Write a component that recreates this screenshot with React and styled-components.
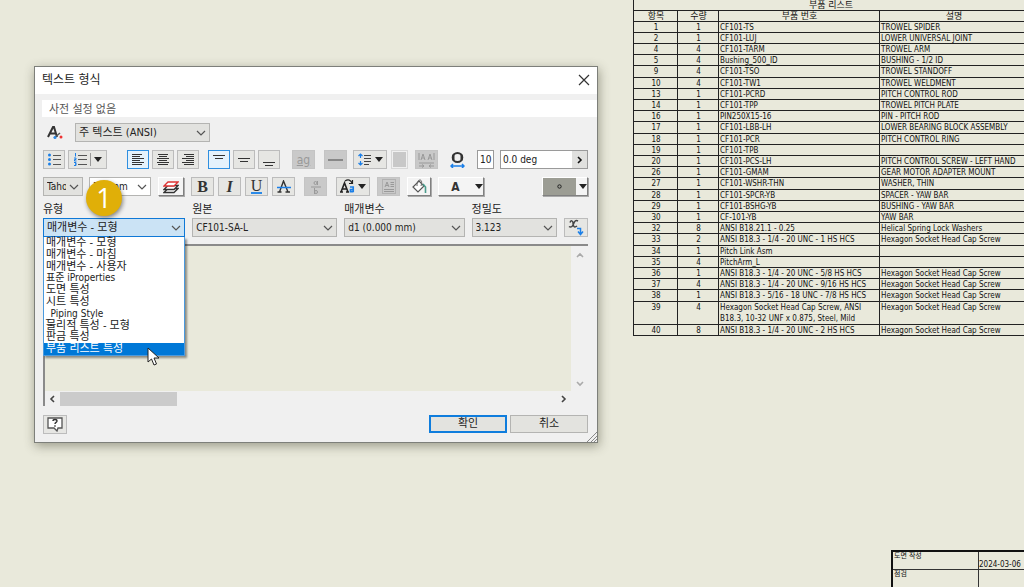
import React from 'react';
import styled, { createGlobalStyle, css } from 'styled-components';

const Global = createGlobalStyle`
  * { box-sizing: border-box; }
  body { margin: 0; background: #e9e9db; }
  body, button, input, select, table {
    font-family: 'DejaVu Sans Condensed', 'Noto Sans', 'Noto Sans CJK KR', sans-serif;
  }
`;

const Page = styled.main`
  display: flex;
  flex-direction: column;
  min-height: 100vh;
  overflow: hidden;
  color: #222;
`;

const Workspace = styled.div`
  display: flex;
  align-items: flex-start;
  padding-left: 34px;
  gap: 35px;
`;

/* ---------- dialog ---------- */

const Dialog = styled.section`
  position: relative;
  flex: 1;
  min-width: 0;
  margin-top: 66px;
  border: 1px solid #7d7f7a;
  background: #f0f0f0;
  box-shadow: 1px 3px 10px rgba(60, 60, 40, 0.45);
  font-size: 11px;
`;

const TitleBar = styled.header`
  display: flex;
  align-items: center;
  justify-content: space-between;
  height: 27px;
  padding: 0 7px 2px;
  background: #fff;
`;

const Title = styled.h1`
  margin: 0;
  font-size: 12px;
  font-weight: 400;
  line-height: 16px;
`;

const CloseButton = styled.button`
  display: flex;
  padding: 0;
  border: 0;
  background: none;
`;

const Preset = styled.input`
  display: block;
  width: calc(100% - 7px);
  height: 17px;
  margin: 6px 0 6px 7px;
  padding: 0 7px 2px;
  border: 0;
  background: #fff;
  color: #555;
  font-size: 11px;
`;

const Row = styled.div`
  display: flex;
  align-items: center;
  height: 19px;
  margin: 0 9px 8px 8px;
`;

const Group = styled.div`
  display: flex;
  align-items: center;
  gap: ${(p) => p.$gap || 3}px;
  margin-left: ${(p) => (p.$push ? 'auto' : `${p.$lead || 0}px`)};
  flex: ${(p) => (p.$grow ? '1' : 'none')};
`;

const ToolButton = styled.button`
  display: flex;
  align-items: center;
  justify-content: center;
  gap: 3px;
  flex: none;
  width: ${(p) => p.$w || 22}px;
  height: 19px;
  padding: 0;
  border: 1px solid #bcbcbc;
  background: #e6e6e3;
  color: #333;
  ${(p) => p.$on && css`border: 1px solid #2f8fe0; background: #e4f2fc;`}
  ${(p) => p.$off && css`border-color: #c4c4c4; background: #c9c9c9; color: #999;`}
  ${(p) => p.$raised && css`
    background: #f4f4f4;
    border-color: #fff #808080 #808080 #fff;
    box-shadow: 1px 1px 0 #aaa;
  `}
`;

const SelectBox = styled.span`
  position: relative;
  display: flex;
  width: ${(p) => (p.$w ? `${p.$w}px` : 'auto')};
  min-width: 0;
  height: 19px;
  border: 1px solid ${(p) => (p.$open ? '#0f78d6' : '#b4b4b2')};
  background: ${(p) => (p.$open ? '#cbe3f5' : p.$white ? '#fff' : '#e2e2df')};

  select {
    appearance: none;
    flex: 1;
    min-width: 0;
    width: 100%;
    padding: 0 16px 0 3px;
    border: 0;
    background: none;
    color: #222;
    font-size: ${(p) => (p.$latin ? 10 : 11)}px;
    line-height: 17px;
    text-overflow: clip;
  }
  svg {
    position: absolute;
    right: 3px;
    top: 6px;
    pointer-events: none;
  }
`;

const NumberField = styled.input`
  width: ${(p) => (p.$w ? `${p.$w}px` : '100%')};
  min-width: 0;
  height: 19px;
  padding: 0 1px 0 2px;
  border: 1px solid #9a9a9a;
  background: #fff;
  color: #222;
  font-size: 10px;
`;

const AngleField = styled.span`
  display: flex;
  flex: 1;
  min-width: 0;
  border: 1px solid #9a9a9a;
  height: 19px;
  input { border: 0; height: 17px; }
  button {
    display: flex;
    align-items: center;
    justify-content: center;
    flex: none;
    width: 15px;
    padding: 0;
    border: 0;
    background: #e0e0de;
  }
`;

const ColorBox = styled.span`
  width: 17px;
  height: 19px;
  border: 1px solid #d8d8d8;
  background: #c8c8c8;
  box-shadow: inset 0 0 0 1px #f0f0f0;
`;

const Glyph = styled.span`
  font-family: 'Liberation Serif', serif;
  font-size: 16px;
  line-height: 16px;
  font-weight: ${(p) => (p.$light ? 400 : 700)};
  font-style: ${(p) => (p.$italic ? 'italic' : 'normal')};
  ${(p) => p.$under && 'border-bottom: 2px solid #2b8ae8; font-weight: 400; line-height: 13px;'}
`;

const SmallGlyph = styled.span`
  font-size: 12px;
  line-height: 12px;
  font-weight: ${(p) => (p.$bold ? 700 : 400)};
  text-decoration: ${(p) => (p.$under ? 'underline' : 'none')};
`;

const Swatch = styled.span`
  flex: 1;
  align-self: stretch;
  display: flex;
  align-items: center;
  justify-content: center;
  background: #9c9d94;
`;

const Fields = styled.div`
  display: grid;
  grid-template-columns: 143fr 146fr 121fr 86fr 24px;
  column-gap: 7px;
  align-items: end;
  margin: 0 9px 7px 8px;
`;

const Field = styled.div`
  position: relative;
  min-width: 0;
  label {
    display: block;
    height: 14px;
    line-height: 12px;
    white-space: nowrap;
  }
`;

const Menu = styled.ul`
  position: absolute;
  z-index: 2;
  top: 100%;
  left: 0;
  right: 0;
  display: flex;
  flex-direction: column;
  height: 119px;
  margin: 0;
  padding: 0;
  border: solid #4b9ade;
  border-width: 0 1px 1px;
  background: #fff;
  box-shadow: 2px 2px 2px rgba(0, 0, 0, 0.4);
  list-style: none;
`;

const Option = styled.li`
  flex: 1;
  min-height: 0;
  padding-left: 2px;
  font-size: ${(p) => (p.$latin ? 10 : 11)}px;
  line-height: 12px;
  white-space: nowrap;
  ${(p) => p.$on && css`background: #0078d7; color: #fff;`}
`;

const Editor = styled.div`
  display: grid;
  grid-template: 145px 15px / 1fr 17px;
  margin: 0 9px 9px 8px;
  border-top: 2px solid #8a8a8a;
  border-left: 2px solid #8a8a8a;
  background: #f0f0f0;

  textarea {
    width: 100%;
    height: 100%;
    padding: 4px;
    border: 0;
    resize: none;
    background: #e9e9db;
  }
`;

const VerticalScroll = styled.div`
  display: flex;
  flex-direction: column;
  align-items: center;
  justify-content: space-between;
  padding: 5px 0 3px;
`;

const HorizontalScroll = styled.div`
  display: flex;
  align-items: center;
  justify-content: space-between;
  padding: 0 3px;
`;

const Thumb = styled.span`
  width: 117px;
  height: 14px;
  margin: 0 auto 0 4px;
  background: #cbcbcb;
`;

const Footer = styled.footer`
  display: flex;
  gap: 3px;
  padding: 0 9px 8px 8px;
`;

const Spacer = styled.span`
  flex: 1;
`;

const DialogButton = styled.button`
  width: 78px;
  height: 18px;
  padding: 0;
  border: ${(p) => (p.$primary ? '2px solid #0f7ddd' : '1px solid #b4b4b2')};
  background: #e3e3df;
  color: #222;
  font-size: 11px;
  line-height: 14px;
`;

const Grip = styled.svg`
  position: absolute;
  right: 0;
  bottom: 0;
`;

const Badge = styled.span`
  position: absolute;
  z-index: 3;
  left: 51px;
  top: 113px;
  width: 36px;
  height: 36px;
  border-radius: 50%;
  background: #e0af08;
  box-shadow: 1px 2px 4px rgba(0, 0, 0, 0.45);
  color: #fff;
  font-family: 'Open Sans', sans-serif;
  font-size: 27px;
  line-height: 36px;
  text-align: center;
`;

const Pointer = styled.svg`
  position: absolute;
  z-index: 4;
  left: 112px;
  top: 280px;
`;

/* ---------- drawing sheet ---------- */

const Sheet = styled.div`
  flex: none;
  width: 391px;
  overflow: hidden;
`;

const PartsTable = styled.table`
  width: 395px;
  table-layout: fixed;
  border-collapse: separate;
  border-spacing: 0;
  border-left: 1px solid #222;
  font-size: 8px;
  line-height: 9px;
  color: #111;

  th, td {
    height: 11px;
    padding: 1px 0 0 1px;
    border: 0 solid #222;
    border-width: 0 1px 1px 0;
    font-weight: 400;
    text-align: left;
    vertical-align: top;
    white-space: nowrap;
  }
  thead th { font-size: 9px; text-align: center; }
  td:nth-child(-n + 2) { text-align: center; }
  tbody tr:nth-child(5n) td { height: 12px; }
`;

const Line = styled.span`
  display: block;
  & + & { margin-top: 2px; padding-bottom: 1px; }
`;

const TitleBlock = styled.table`
  align-self: flex-end;
  width: 133px;
  margin-top: auto;
  table-layout: fixed;
  border-collapse: separate;
  border-spacing: 0;
  border: solid #111;
  border-width: 2px 0 0 2px;
  color: #111;

  th, td {
    padding: 0 1px;
    border: 0 solid #333;
    font-weight: 400;
    line-height: 8px;
    text-align: left;
    white-space: nowrap;
  }
  th { font-size: 7px; border-right-width: 1px; vertical-align: top; }
  td { font-size: 8px; vertical-align: bottom; padding: 0; }
  tr:first-child > * { height: 18px; border-bottom-width: 1px; }
  tr:last-child > * { height: 17px; }
`;

/* ---------- icons ---------- */

const Chevron = () => (
  <svg width="10" height="6" viewBox="0 0 10 6" fill="none" stroke="#555" strokeWidth="1.2">
    <path d="M1 1l4 4 4-4" />
  </svg>
);

const Arrow = ({ up, left, right, color = '#444' }) => (
  <svg width="8" height="8" viewBox="0 0 8 8" fill="none" stroke={color} strokeWidth="1.6">
    <path d={up ? 'M1 6l3-3 3 3' : left ? 'M6 1L3 4l3 3' : right ? 'M2 1l3 3-3 3' : 'M1 2l3 3 3-3'} />
  </svg>
);

const Triangle = () => (
  <svg width="8" height="5" viewBox="0 0 8 5"><path d="M0 0h8L4 5z" fill="#222" /></svg>
);

const BulletIcon = () => (
  <svg width="13" height="13" viewBox="0 0 13 13">
    <circle cx="1.500" cy="2" r="1.500" fill="#1b7fe8" />
    <circle cx="1.500" cy="6.500" r="1.500" fill="#1b7fe8" />
    <circle cx="1.500" cy="11" r="1.500" fill="#1b7fe8" />
    <path d="M5 2.500h8M5 6.500h8M5 11.500h8" stroke="#555" strokeWidth="1" />
  </svg>
);

const NumberedIcon = () => (
  <svg width="13" height="13" viewBox="0 0 13 13" fill="none">
    <path d="M1.500 0v3.500M0 5h2v1.500H0.500V8h2M0 9.500h2v1.500H1h1v1.500H0" stroke="#1b7fe8" />
    <path d="M4 2.500h9M4 6.500h9M4 11.500h9" stroke="#555" />
  </svg>
);

const AlignIcon = ({ kind }) => {
  const start = (w) => (kind === 'left' ? 0 : kind === 'center' ? (12 - w) / 2 : 12 - w);
  return (
    <svg width="12" height="13" viewBox="0 0 12 13">
      {[10, 8, 12, 8, 12, 10].map((w, i) => (
        <rect key={i} x={start(w)} y={i * 2 + 1} width={w} height="1" fill="#333" />
      ))}
    </svg>
  );
};

const VAlignIcon = ({ y }) => (
  <svg width="12" height="15" viewBox="0 0 12 15" stroke="#333">
    <path d={`M0 ${y}.5h12M2 ${y + 3}.5h8`} />
  </svg>
);

const StyleIcon = () => (
  <svg width="17" height="15" viewBox="0 0 17 15" fill="none">
    <path d="M1 12L6 2h1l3 10M3.500 8.500h6" stroke="#333" strokeWidth="2" />
    <path d="M7 13l6-5" stroke="#555" strokeWidth="1.500" />
    <circle cx="8" cy="12.500" r="1.500" fill="#2b8ae8" />
    <circle cx="14" cy="12" r="1.500" fill="#e33" />
  </svg>
);

const SpacingIcon = () => (
  <svg width="14" height="13" viewBox="0 0 14 13" fill="none">
    <path d="M2.500 1v4M.500 3l2-2 2 2M2.500 8v4M.500 10l2 2 2-2" stroke="#1b7fe8" strokeWidth="1.200" />
    <path d="M6 2.500h7M6 5.500h7M6 8.500h7M6 11.500h5" stroke="#444" />
  </svg>
);

const FitTextIcon = () => (
  <svg width="17" height="16" viewBox="0 0 17 16" fill="none" stroke="#999">
    <path d="M1 1v7M16 1v7M3 8l2-6 2 6M4 6h2M10 8l2-6 2 6M11 6h2M1 11h15M1 14h5M4 12.500L6 14l-2 1.500M16 14h-5M13 12.500L11 14l2 1.500" />
  </svg>
);

const StretchIcon = () => (
  <svg width="15" height="16" viewBox="0 0 15 16" fill="none">
    <ellipse cx="7.500" cy="5.500" rx="4.800" ry="4.500" stroke="#333" strokeWidth="2" />
    <path d="M3.500 2.500v6M11.500 2.500v6" stroke="#333" strokeWidth="2" />
    <path d="M1 14h13M3 12l-2 2 2 2M12 12l2 2-2 2" stroke="#1b7fe8" strokeWidth="1.500" />
  </svg>
);

const LayersIcon = () => (
  <svg width="16" height="14" viewBox="0 0 16 14" fill="#fff" strokeWidth="1.300">
    <path d="M1 12.500l4-4h10l-4 4z" stroke="#333" />
    <path d="M1 9.500l4-4h10l-4 4z" stroke="#333" />
    <path d="M1 6l4-4h10l-4 4z" stroke="#d33" />
  </svg>
);

const StrikeIcon = () => (
  <svg width="14" height="13" viewBox="0 0 14 13" fill="none">
    <path d="M2.500 12L6.500 1l4.500 11M.500 12h4M8.500 12h4.500" stroke="#333" strokeWidth="1.400" />
    <path d="M0 7.500h14" stroke="#1b7fe8" strokeWidth="1.500" />
  </svg>
);

const FractionIcon = () => (
  <svg width="10" height="16" viewBox="0 0 10 16" fill="none" stroke="#999">
    <circle cx="4.500" cy="4" r="1.500" /><path d="M6.500 2v4M0 8h10M3.500 9v6" /><circle cx="5" cy="13" r="1.500" />
  </svg>
);

const CaseIcon = () => (
  <svg width="15" height="15" viewBox="0 0 15 15" fill="none">
    <path d="M1 13L4.500 4 8 13M2.500 10h4M0 13h3M6 13h3" stroke="#222" strokeWidth="1.600" />
    <path d="M5 2c3-2 6-1 7 2M12.500 1v3.500H9" stroke="#222" strokeWidth="1.200" />
    <path d="M10 8h3.200v5.200M13 10.500h-2.500v2.200H13" stroke="#1b7fe8" strokeWidth="1.700" />
  </svg>
);

const TextBoxIcon = () => (
  <svg width="14" height="15" viewBox="0 0 14 15" fill="none" stroke="#999">
    <rect x=".500" y=".500" width="13" height="14" strokeDasharray="1 1" />
    <path d="M3 8l2-5 2 5M4 6.500h2M8.500 3.500H12M8.500 5.500H12M8.500 7.500H12M2 10.500h10M2 12.500h10" />
  </svg>
);

const BucketIcon = () => (
  <svg width="15" height="15" viewBox="0 0 15 15" fill="none">
    <path d="M7 2l5 5-6 6-5-5z" fill="#fff" stroke="#555" strokeWidth="1.200" />
    <path d="M5 7c0-4 1-6 3-6s2 3 1 6" stroke="#666" />
    <path d="M11 5l2.500 3v6" stroke="#4a9c8c" strokeWidth="1.600" />
  </svg>
);

const ParameterIcon = () => (
  <svg width="16" height="17" viewBox="0 0 16 17" fill="none">
    <path d="M2 3.500C3 1 5 1.500 5 4s1 5.500 4 3M10 2C7.500.500 6.500 2.500 5.500 5S3 9 1 7.500" stroke="#444" strokeWidth="1.500" />
    <path d="M9 9.500h3.500V15M10 12.500l2.500 3 2.500-3" stroke="#1b7fe8" strokeWidth="1.500" />
  </svg>
);

const HelpIcon = () => (
  <svg width="16" height="15" viewBox="0 0 16 15" fill="none">
    <path d="M1 1h14v10h-4l-1 3-3-3H1z" fill="#fff" stroke="#555" strokeWidth="1.300" />
    <path d="M6 4c0-2 4-2 4 0 0 1.500-2 1.300-2 3M8 8.300v1.400" stroke="#333" strokeWidth="1.400" />
  </svg>
);

/* ---------- data ---------- */

const parts = [
  [1, 1, 'CF101-TS', 'TROWEL SPIDER'],
  [2, 1, 'CF101-LUJ', 'LOWER UNIVERSAL JOINT'],
  [4, 4, 'CF101-TARM', 'TROWEL ARM'],
  [5, 4, 'Bushing_500_ID', 'BUSHING - 1/2 ID'],
  [9, 4, 'CF101-TSO', 'TROWEL STANDOFF'],
  [10, 4, 'CF101-TW1', 'TROWEL WELDMENT'],
  [13, 1, 'CF101-PCRD', 'PITCH CONTROL ROD'],
  [14, 1, 'CF101-TPP', 'TROWEL PITCH PLATE'],
  [16, 1, 'PIN250X15-16', 'PIN - PITCH ROD'],
  [17, 1, 'CF101-LBB-LH', 'LOWER BEARING BLOCK ASSEMBLY'],
  [18, 1, 'CF101-PCR', 'PITCH CONTROL RING'],
  [19, 1, 'CF101-TPB', ''],
  [20, 1, 'CF101-PCS-LH', 'PITCH CONTROL SCREW - LEFT HAND'],
  [26, 1, 'CF101-GMAM', 'GEAR MOTOR ADAPTER MOUNT'],
  [27, 1, 'CF101-WSHR-THN', 'WASHER, THIN'],
  [28, 1, 'CF101-SPCR-YB', 'SPACER - YAW BAR'],
  [29, 1, 'CF101-BSHG-YB', 'BUSHING - YAW BAR'],
  [30, 1, 'CF-101-YB', 'YAW BAR'],
  [32, 8, 'ANSI B18.21.1 - 0.25', 'Helical Spring Lock Washers'],
  [33, 2, 'ANSI B18.3 - 1/4 - 20 UNC - 1 HS HCS', 'Hexagon Socket Head Cap Screw'],
  [34, 1, 'Pitch Link Asm', ''],
  [35, 4, 'PitchArm_L', ''],
  [36, 1, 'ANSI B18.3 - 1/4 - 20 UNC - 5/8 HS HCS', 'Hexagon Socket Head Cap Screw'],
  [37, 4, 'ANSI B18.3 - 1/4 - 20 UNC - 9/16 HS HCS', 'Hexagon Socket Head Cap Screw'],
  [38, 1, 'ANSI B18.3 - 5/16 - 18 UNC - 7/8 HS HCS', 'Hexagon Socket Head Cap Screw'],
  [39, 4, ['Hexagon Socket Head Cap Screw, ANSI', 'B18.3, 10-32 UNF x 0.875, Steel, Mild'], 'Hexagon Socket Head Cap Screw'],
  [40, 8, 'ANSI B18.3 - 1/4 - 20 UNC - 2 HS HCS', 'Hexagon Socket Head Cap Screw'],
];

const types = [
  '매개변수 - 모형', '매개변수 - 마침', '매개변수 - 사용자', '표준 iProperties', '도면 특성',
  '시트 특성', '_Piping Style', '물리적 특성 - 모형', '판금 특성', '부품 리스트 특성',
];

const hasLatin = (text) => /[A-Za-z0-9]/.test(text);

function Select({ id, label, value, ...box }) {
  return (
    <SelectBox $latin={hasLatin(value)} {...box}>
      <select id={id} aria-label={label} defaultValue={value}>
        <option>{value}</option>
      </select>
      <Chevron />
    </SelectBox>
  );
}

function LabeledSelect({ id, label, value, open, children }) {
  return (
    <Field>
      <label htmlFor={id}>{label}</label>
      <Select id={id} value={value} $open={open} />
      {children}
    </Field>
  );
}

function TextFormatDialog() {
  return (
    <Dialog role="dialog" aria-labelledby="dialog-title">
      <TitleBar>
        <Title id="dialog-title">텍스트 형식</Title>
        <CloseButton aria-label="닫기">
          <svg width="12" height="12" viewBox="0 0 12 12" stroke="#333" strokeWidth="1.200">
            <path d="M1 1l10 10M11 1L1 11" />
          </svg>
        </CloseButton>
      </TitleBar>
      <Preset aria-label="사전 설정" defaultValue="사전 설정 없음" />

      <Row>
        <Group $gap={11} $lead={4}>
          <StyleIcon />
          <Select label="스타일" value="주 텍스트 (ANSI)" $w={135} $latin={false} />
        </Group>
      </Row>

      <Row>
        <Group>
          <ToolButton aria-label="글머리 기호"><BulletIcon /></ToolButton>
          <ToolButton aria-label="번호" $w={39}><NumberedIcon /><svg width="1" height="13"><path d="M.500 0v13" stroke="#999" /></svg><Triangle /></ToolButton>
        </Group>
        <Group $lead={20}>
          <ToolButton aria-label="왼쪽" $on><AlignIcon kind="left" /></ToolButton>
          <ToolButton aria-label="가운데"><AlignIcon kind="center" /></ToolButton>
          <ToolButton aria-label="오른쪽"><AlignIcon kind="right" /></ToolButton>
        </Group>
        <Group $lead={9}>
          <ToolButton aria-label="위" $on><VAlignIcon y={3} /></ToolButton>
          <ToolButton aria-label="중간"><VAlignIcon y={6} /></ToolButton>
          <ToolButton aria-label="아래"><VAlignIcon y={10} /></ToolButton>
        </Group>
        <Group $lead={12} $gap={9}>
          <ToolButton aria-label="기준선" $off $w={23}><SmallGlyph $under>ag</SmallGlyph></ToolButton>
          <ToolButton aria-label="한 줄" $off $w={23}><svg width="15" height="2"><path d="M0 1h15" stroke="#888" strokeWidth="2" /></svg></ToolButton>
        </Group>
        <Group $lead={6} $gap={4}>
          <ToolButton aria-label="간격" $w={34}><SpacingIcon /><Triangle /></ToolButton>
          <ColorBox />
        </Group>
        <Group $lead={7}>
          <ToolButton aria-label="텍스트 맞춤" $off $w={23}><FitTextIcon /></ToolButton>
        </Group>
        <Group $lead={12} $gap={12}>
          <StretchIcon />
          <NumberField aria-label="신축" defaultValue="10" $w={17} />
        </Group>
        <Group $lead={6} $grow>
          <AngleField>
            <NumberField aria-label="회전" defaultValue="0.0 deg" />
            <button aria-label="회전 옵션"><Arrow right color="#111" /></button>
          </AngleField>
        </Group>
      </Row>

      <Row>
        <Group $gap={6}>
          <Select label="글꼴" value="Tahoma" $w={40} />
          <Select label="크기" value="3.5 mm" $w={62} $white />
        </Group>
        <Group $lead={7}>
          <ToolButton aria-label="도면층" $w={26} $raised><LayersIcon /></ToolButton>
        </Group>
        <Group $lead={7} $gap={4}>
          <ToolButton aria-label="굵게" $w={23}><Glyph>B</Glyph></ToolButton>
          <ToolButton aria-label="기울임꼴" $w={23}><Glyph $italic>I</Glyph></ToolButton>
          <ToolButton aria-label="밑줄" $w={23}><Glyph $under>U</Glyph></ToolButton>
          <ToolButton aria-label="취소선" $w={23}><StrikeIcon /></ToolButton>
        </Group>
        <Group $lead={9} $gap={9}>
          <ToolButton aria-label="스택" $off $w={23}><FractionIcon /></ToolButton>
          <ToolButton aria-label="대소문자" $w={34}><CaseIcon /><Triangle /></ToolButton>
        </Group>
        <Group $lead={7} $gap={7}>
          <ToolButton aria-label="텍스트 상자" $off $w={23}><TextBoxIcon /></ToolButton>
          <ToolButton aria-label="채우기" $w={24} $raised><BucketIcon /></ToolButton>
          <ToolButton aria-label="텍스트 색상" $w={46} $raised>
            <Spacer /><SmallGlyph $bold>A</SmallGlyph><Spacer /><Triangle />
          </ToolButton>
        </Group>
        <Group $push>
          <ToolButton aria-label="기호" $w={46} $raised>
            <Swatch><svg width="5" height="5"><circle cx="2.500" cy="2.500" r="1.700" fill="none" stroke="#222" /></svg></Swatch>
            <Triangle />
          </ToolButton>
        </Group>
      </Row>

      <Fields>
        <LabeledSelect id="type" label="유형" value="매개변수 - 모형" open>
          <Menu role="listbox" aria-label="유형">
            {types.map((t, i) => (
              <Option
                key={t}
                role="option"
                aria-selected={i === types.length - 1}
                $on={i === types.length - 1}
                $latin={hasLatin(t)}
              >
                {t}
              </Option>
            ))}
          </Menu>
        </LabeledSelect>
        <LabeledSelect id="source" label="원본" value="CF101-SA-L" />
        <LabeledSelect id="parameter" label="매개변수" value="d1 (0.000 mm)" />
        <LabeledSelect id="precision" label="정밀도" value="3.123" />
        <ToolButton aria-label="매개변수 추가" $w={24}><ParameterIcon /></ToolButton>
      </Fields>

      <Editor>
        <textarea aria-label="텍스트" />
        <VerticalScroll><Arrow up color="#aaa" /><Arrow color="#aaa" /></VerticalScroll>
        <HorizontalScroll><Arrow left /><Thumb /><Arrow right /></HorizontalScroll>
      </Editor>

      <Footer>
        <ToolButton aria-label="도움말" $w={24}><HelpIcon /></ToolButton>
        <Spacer />
        <DialogButton $primary>확인</DialogButton>
        <DialogButton>취소</DialogButton>
      </Footer>

      <Grip width="11" height="10" viewBox="0 0 11 10" stroke="#888" fill="none">
        <path d="M1 10L11 0M5 10l6-6M8 10l3-3" />
      </Grip>
      <Badge>1</Badge>
      <Pointer width="13" height="20" viewBox="0 0 13 20">
        <path d="M1 1v14l3.500-3 2.500 6 2.500-1-2.500-6H12z" fill="#fff" stroke="#222" />
      </Pointer>
    </Dialog>
  );
}

function PartsList() {
  return (
    <PartsTable>
      <colgroup>
        <col style={{ width: 44 }} />
        <col style={{ width: 41 }} />
        <col style={{ width: 161 }} />
        <col />
      </colgroup>
      <thead>
        <tr><th colSpan={4}>부품 리스트</th></tr>
        <tr><th>항목</th><th>수량</th><th>부품 번호</th><th>설명</th></tr>
      </thead>
      <tbody>
        {parts.map(([item, qty, number, description]) => (
          <tr key={item}>
            <td>{item}</td>
            <td>{qty}</td>
            <td>{Array.isArray(number) ? number.map((n) => <Line key={n}>{n}</Line>) : number}</td>
            <td>{description}</td>
          </tr>
        ))}
      </tbody>
    </PartsTable>
  );
}

export default function App() {
  return (
    <>
      <Global />
      <Page>
        <Workspace>
          <TextFormatDialog />
          <Sheet><PartsList /></Sheet>
        </Workspace>
        <TitleBlock>
          <colgroup><col style={{ width: 86 }} /><col /></colgroup>
          <tbody>
            <tr><th scope="row">도면 작성</th><td>2024-03-06</td></tr>
            <tr><th scope="row">점검</th><td /></tr>
          </tbody>
        </TitleBlock>
      </Page>
    </>
  );
}
